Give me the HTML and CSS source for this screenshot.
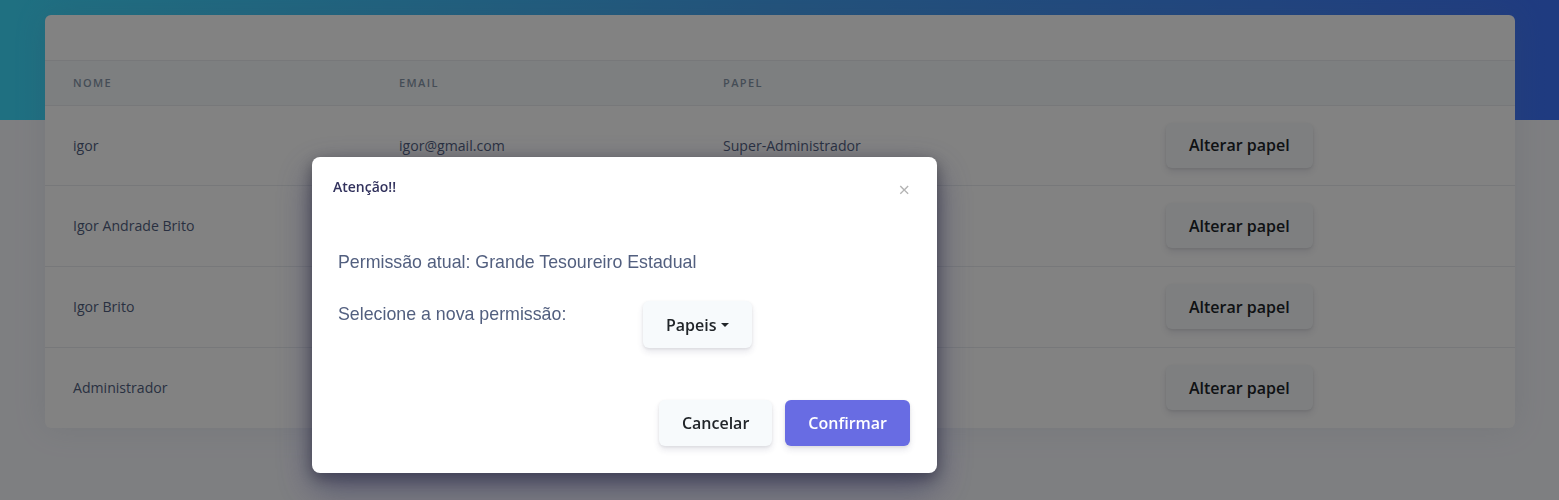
FILE: index.html
```html
<!DOCTYPE html>
<html lang="pt-BR">
<head>
<meta charset="utf-8">
<title>Usuários</title>
<link rel="stylesheet" href="styles.css">
</head>
<body>
<div class="header"></div>
<main class="main">
  <section class="card">
    <div class="card-header"></div>
    <table class="users">
      <colgroup>
        <col class="c-name"><col class="c-email"><col class="c-role"><col>
      </colgroup>
      <thead>
        <tr><th>Nome</th><th>Email</th><th>Papel</th><th></th></tr>
      </thead>
      <tbody>
        <tr><td>igor</td><td>igor@gmail.com</td><td>Super-Administrador</td><td><button class="btn btn-secondary">Alterar papel</button></td></tr>
        <tr><td>Igor Andrade Brito</td><td></td><td></td><td><button class="btn btn-secondary">Alterar papel</button></td></tr>
        <tr><td>Igor Brito</td><td></td><td></td><td><button class="btn btn-secondary">Alterar papel</button></td></tr>
        <tr><td>Administrador</td><td></td><td></td><td><button class="btn btn-secondary">Alterar papel</button></td></tr>
      </tbody>
    </table>
  </section>
</main>

<div class="backdrop"></div>
<div class="modal">
  <div class="modal-header">
    <h5 class="modal-title">Atenção!!</h5>
    <span class="close">×</span>
  </div>
  <div class="modal-body">
    <p class="current">Permissão atual: Grande Tesoureiro Estadual</p>
    <div class="select-row">
      <span class="label">Selecione a nova permissão:</span>
      <button class="btn btn-secondary btn-drop">Papeis<span class="caret"></span></button>
    </div>
  </div>
  <div class="modal-footer">
    <button class="btn btn-secondary">Cancelar</button>
    <button class="btn btn-primary">Confirmar</button>
  </div>
</div>
</body>
</html>
```
FILE: styles.css
```css
* { box-sizing: border-box; }
html, body { margin: 0; }
body {
  background: #f8f9fe;
  font-family: "Open Sans", "Liberation Sans", sans-serif;
  color: #525f7f;
  height: 500px;
  overflow: hidden;
}
.header {
  height: 120px;
  background: linear-gradient(90deg, #3ddcfe 0%, #43a2f4 50%, #3e74fc 100%);
}
.main {
  margin-top: -105px;
  padding: 0 44px 0 45px;
}
.card {
  background: #fff;
  border-radius: 6px;
  box-shadow: 0 0 2rem 0 rgba(136, 152, 170, .15);
  overflow: hidden;
}
.card-header {
  height: 46px;
  border-bottom: 1px solid #e9ecef;
}
.users {
  width: 100%;
  border-collapse: collapse;
  table-layout: fixed;
}
.c-name { width: 326px; }
.c-email { width: 324px; }
.c-role { width: 443px; }
.users th {
  height: 44px;
  padding: 0 28px;
  background: #f6f9fc;
  border-bottom: 1px solid #e9ecef;
  text-align: left;
  font-size: 11px;
  font-weight: 600;
  letter-spacing: 1.4px;
  text-transform: uppercase;
  color: #8898aa;
}
.users td {
  height: 81px;
  padding: 0 28px;
  font-size: 14.1px;
  color: #525f7f;
  border-top: 1px solid #e9ecef;
  vertical-align: middle;
}
.users tbody tr:first-child td { border-top: 0; height: 80px; }

.btn {
  font-family: "Open Sans", "Liberation Sans", sans-serif;
  font-weight: 600;
  font-size: 16px;
  border: 0;
  border-radius: 6px;
  height: 45px;
  padding: 0 23px;
  cursor: pointer;
  box-shadow: 0 4px 6px rgba(50, 50, 93, .11), 0 1px 3px rgba(0, 0, 0, .08);
}
.btn-secondary { background: #f7fafc; color: #212529; }
.btn-primary { background: #686ce3; color: #fff; }

.backdrop {
  position: fixed;
  inset: 0;
  background: rgba(0, 0, 0, .49);
}
.modal {
  position: fixed;
  left: 312px;
  top: 157px;
  width: 625px;
  height: 316px;
  background: #fff;
  border-radius: 8px;
  box-shadow: 0 15px 35px rgba(50, 50, 93, .6), 0 5px 15px rgba(0, 0, 0, .4);
  display: flex;
  flex-direction: column;
}
.modal-header {
  height: 60px;
  padding: 20px 27px 0 21px;
  display: flex;
  justify-content: space-between;
  align-items: flex-start;
}
.modal-title {
  margin: 0;
  font-size: 14px;
  font-weight: 600;
  line-height: 20px;
  color: #32325d;
}
.close {
  font-size: 20px;
  line-height: 20px;
  margin-top: 3px;
  color: #b3b3b3;
}
.modal-body {
  padding: 33px 26px 0 26px;
  font-family: "Liberation Sans", Arial, sans-serif;
  font-size: 17.8px;
  color: #525f7f;
}
.current {
  margin: 0 0 27px;
  line-height: 24px;
}
.select-row {
  display: grid;
  grid-template-columns: 305px auto;
  justify-content: start;
  align-items: start;
}
.label { line-height: 26px; }
.btn-drop {
  height: 47px;
  padding: 0 23px;
  display: inline-flex;
  align-items: center;
}
.caret {
  display: inline-block;
  margin-left: 4px;
  border-top: 4.5px solid currentColor;
  border-left: 4.5px solid transparent;
  border-right: 4.5px solid transparent;
}
.modal-footer {
  margin-top: auto;
  padding: 0 27px 27px 0;
  display: flex;
  justify-content: flex-end;
  gap: 13px;
}
.modal-footer .btn { height: 46px; }
```
